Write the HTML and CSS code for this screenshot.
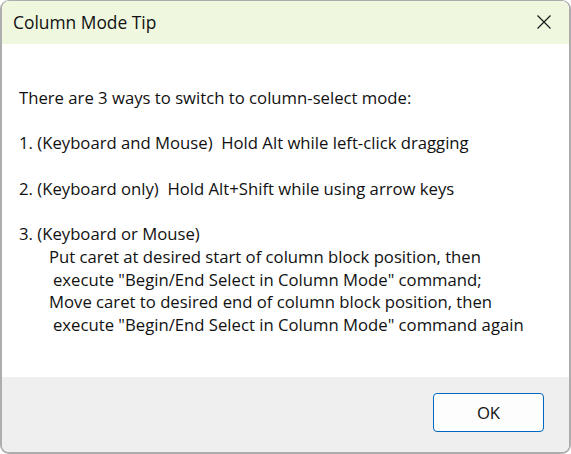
FILE: index.html
```html
<!DOCTYPE html>
<html>
<head>
<meta charset="utf-8">
<link rel="stylesheet" href="styles.css">
</head>
<body>
<div class="window">
  <div class="titlebar">
    <span class="title">Column Mode Tip</span>
    <svg class="close" width="16" height="16" viewBox="0 0 16 16"><path d="M1.5 1.5 L14.5 14.5 M14.5 1.5 L1.5 14.5" stroke="#1a1a1a" stroke-width="1.2" fill="none"/></svg>
  </div>
  <div class="content">
    <p class="line">There are 3 ways to switch to column-select mode:</p>
    <p class="line gap">1. (Keyboard and Mouse)&nbsp; Hold Alt while left-click dragging</p>
    <p class="line gap">2. (Keyboard only)&nbsp; Hold Alt+Shift while using arrow keys</p>
    <p class="line gap">3. (Keyboard or Mouse)</p>
    <p class="line ind1">Put caret at desired start of column block position, then</p>
    <p class="line ind2">execute "Begin/End Select in Column Mode" command;</p>
    <p class="line ind1">Move caret to desired end of column block position, then</p>
    <p class="line ind2">execute "Begin/End Select in Column Mode" command again</p>
  </div>
  <div class="footer">
    <button class="ok">OK</button>
  </div>
</div>
</body>
</html>
```

FILE: styles.css
```css
html, body {
  margin: 0;
  padding: 0;
  width: 571px;
  height: 454px;
  overflow: hidden;
  background: #ffffff;
}
.window {
  box-sizing: border-box;
  width: 571px;
  height: 454px;
  border: 2px solid #adadad;
  border-top-width: 1px;
  border-radius: 9px;
  overflow: hidden;
  display: flex;
  flex-direction: column;
  font-family: "Open Sans", "Noto Sans", sans-serif;
  color: #000;
}
.titlebar {
  height: 43px;
  flex: none;
  background: #eff8df;
  display: flex;
  align-items: center;
  justify-content: space-between;
  padding: 0 17px 0 11px;
}
.title {
  font-size: 17.4px;
  color: #111;
  margin-top: -1px;
}
.close {
  display: block;
  margin-top: -1px;
}
.content {
  flex: 1;
  background: #ffffff;
  padding: 43px 0 0 17px;
  font-size: 16.7px;
}
.line {
  margin: 0;
  line-height: 22.7px;
  white-space: nowrap;
  color: #111;
}
.gap {
  margin-top: 22.7px;
}
.ind1 {
  padding-left: 30px;
}
.ind2 {
  padding-left: 34px;
}
.footer {
  height: 75px;
  flex: none;
  background: #efefef;
  display: flex;
  justify-content: flex-end;
  align-items: flex-start;
  padding: 16px 25px 0 0;
  box-sizing: border-box;
}
.ok {
  width: 111px;
  height: 39px;
  border: 1px solid #0067c0;
  border-radius: 4px;
  background: #fdfdfd;
  font-family: "Open Sans", "Noto Sans", sans-serif;
  font-size: 16.7px;
  color: #111;
  padding: 0;
}
```
